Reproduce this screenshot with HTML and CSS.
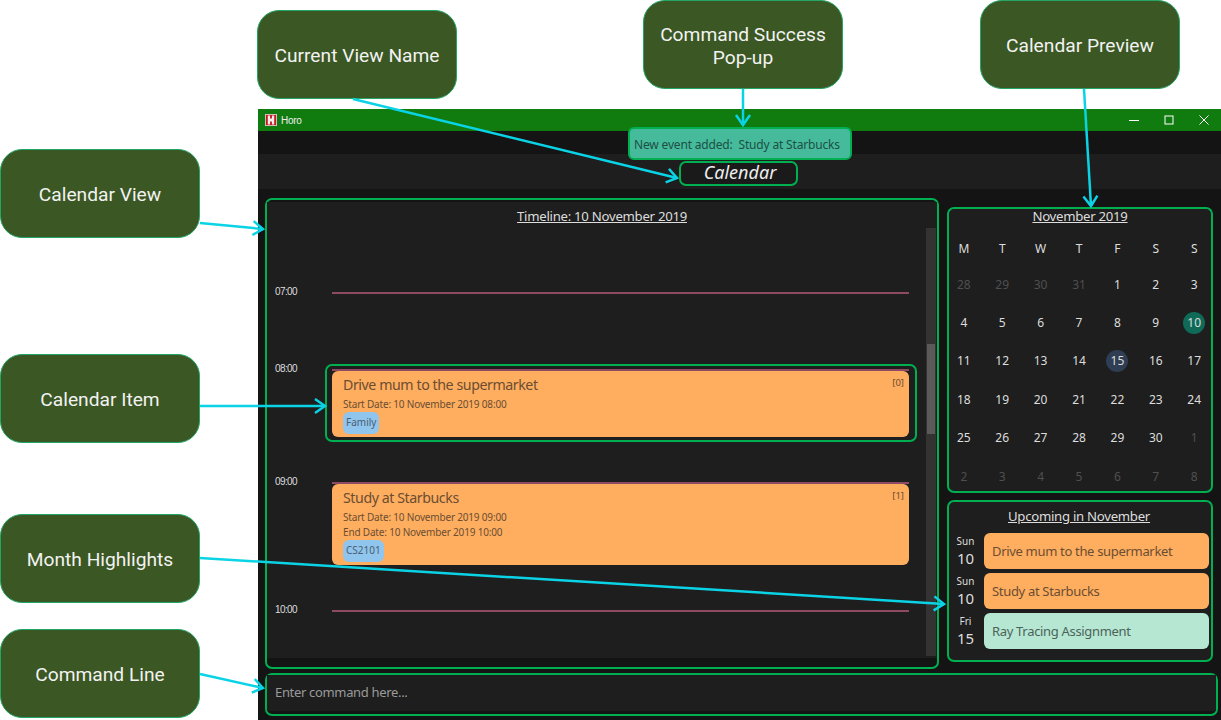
FILE: index.html
```html
<!DOCTYPE html>
<html lang="en">
<head>
  <meta charset="UTF-8">
  <title>Horo</title>
  <link rel="stylesheet" href="styles.css">
</head>
<body>
  <div class="stage">

    <div class="app">
      <div class="titlebar">
        <svg class="logo" width="12" height="12" viewBox="0 0 13 13">
          <rect x="0" y="0" width="13" height="13" fill="#d9c9c9"/>
          <rect x="1" y="1" width="11" height="11" fill="#c4161c"/>
          <path d="M3 1.500h2.500v3.500h2v-3.500H10v10H7.500v-3.500h-2v3.500H3z" fill="#f4eeee"/>
        </svg>
        <span class="app-name">Horo</span>
        <div class="win-controls">
          <svg width="10" height="10" viewBox="0 0 10 10"><path d="M0 5.500h10" stroke="#fff" fill="none"/></svg>
          <svg width="10" height="10" viewBox="0 0 10 10"><rect x="1" y="1" width="8" height="8" stroke="#fff" fill="none"/></svg>
          <svg width="10" height="10" viewBox="0 0 10 10"><path d="M.5.5l9 9M9.500.5l-9 9" stroke="#fff" fill="none"/></svg>
        </div>
      </div>

      <div class="result-bar"></div>
      <div class="view-bar"><div class="view-name">Calendar</div></div>

      <div class="main">
        <div class="columns">
          <div class="panel timeline-panel">
            <div class="timeline-body">
              <h2 class="panel-title timeline-title">Timeline: 10 November 2019</h2>
              <div class="timeline">
                <div class="rows">
                  <div class="hour hour-empty">
                    <span class="hour-label">07:00</span>
                    <div class="hour-line"></div>
                  </div>
                  <div class="hour hour-first">
                    <span class="hour-label">08:00</span>
                    <div>
                      <div class="hour-line"></div>
                      <div class="event">
                        <span class="event-index">[0]</span>
                        <div class="event-name">Drive mum to the supermarket</div>
                        <div class="event-date">Start Date: 10 November 2019 08:00</div>
                        <span class="tag">Family</span>
                      </div>
                    </div>
                  </div>
                  <div class="hour">
                    <span class="hour-label">09:00</span>
                    <div>
                      <div class="hour-line"></div>
                      <div class="event">
                        <span class="event-index">[1]</span>
                        <div class="event-name">Study at Starbucks</div>
                        <div class="event-date">Start Date: 10 November 2019 09:00</div>
                        <div class="event-date">End Date: 10 November 2019 10:00</div>
                        <span class="tag">CS2101</span>
                      </div>
                    </div>
                  </div>
                  <div class="hour">
                    <span class="hour-label">10:00</span>
                    <div class="hour-line"></div>
                  </div>
                </div>
                <div class="scrollbar"><div class="scroll-thumb"></div></div>
              </div>
            </div>
          </div>

          <div class="side">
            <div class="panel month-panel">
              <h2 class="panel-title month-title">November 2019</h2>
              <div class="month-grid">
                <span class="head">M</span><span class="head">T</span><span class="head">W</span><span class="head">T</span><span class="head">F</span><span class="head">S</span><span class="head">S</span>
                <span class="off">28</span><span class="off">29</span><span class="off">30</span><span class="off">31</span><span>1</span><span>2</span><span>3</span>
                <span>4</span><span>5</span><span>6</span><span>7</span><span>8</span><span>9</span><span><b class="has-event">10</b></span>
                <span>11</span><span>12</span><span>13</span><span>14</span><span><b class="today">15</b></span><span>16</span><span>17</span>
                <span>18</span><span>19</span><span>20</span><span>21</span><span>22</span><span>23</span><span>24</span>
                <span>25</span><span>26</span><span>27</span><span>28</span><span>29</span><span>30</span><span class="off">1</span>
                <span class="off">2</span><span class="off">3</span><span class="off">4</span><span class="off">5</span><span class="off">6</span><span class="off">7</span><span class="off">8</span>
              </div>
            </div>

            <div class="panel upcoming-panel">
              <h2 class="panel-title upcoming-title">Upcoming in November</h2>
              <div class="upcoming-row">
                <div class="up-day"><small>Sun</small>10</div>
                <div class="up-card">Drive mum to the supermarket</div>
              </div>
              <div class="upcoming-row">
                <div class="up-day"><small>Sun</small>10</div>
                <div class="up-card">Study at Starbucks</div>
              </div>
              <div class="upcoming-row">
                <div class="up-day"><small>Fri</small>15</div>
                <div class="up-card up-card-task">Ray Tracing Assignment</div>
              </div>
            </div>
          </div>
        </div>

        <div class="panel command-box">
          <div class="command-text">Enter command here...</div>
        </div>
      </div>
    </div>

    <!-- things drawn over the app -->
    <div class="popup">New event added:&nbsp; Study at Starbucks</div>
    <div class="item-mark"></div>

    <div class="callout c-view-name">Current View Name</div>
    <div class="callout c-success">Command Success<br>Pop-up</div>
    <div class="callout c-preview">Calendar Preview</div>
    <div class="callout c-calendar">Calendar View</div>
    <div class="callout c-item">Calendar Item</div>
    <div class="callout c-month">Month Highlights</div>
    <div class="callout c-command">Command Line</div>

    <svg class="arrows" width="1221" height="720" viewBox="0 0 1221 720">
      <defs>
        <marker id="head" markerUnits="userSpaceOnUse" markerWidth="20" markerHeight="20" refX="14" refY="10" orient="auto">
          <path d="M4 3l10 7-10 7" fill="none" stroke="#0bd3e6" stroke-width="2.5"/>
        </marker>
      </defs>
      <g stroke="#0bd3e6" stroke-width="2.5" marker-end="url(#head)">
        <line x1="353" y1="99" x2="677" y2="178"/>
        <line x1="743" y1="89" x2="743" y2="125"/>
        <line x1="1084" y1="89" x2="1091" y2="206"/>
        <line x1="200" y1="223" x2="263" y2="229"/>
        <line x1="200" y1="406" x2="325" y2="406"/>
        <line x1="200" y1="558" x2="944" y2="604"/>
        <line x1="200" y1="674" x2="263" y2="688"/>
      </g>
    </svg>
  </div>
</body>
</html>
```

FILE: styles.css
```css
* {
  box-sizing: border-box;
}
body {
  margin: 0;
  background: #fff;
  font-family: "Noto Sans", sans-serif;
}
.stage {
  position: relative;
  width: 1221px;
  height: 720px;
  overflow: hidden;
}

/* app window */
.app {
  position: absolute;
  left: 258px;
  top: 109px;
  width: 963px;
  height: 611px;
  background: #141414;
  display: flex;
  flex-direction: column;
}
.titlebar {
  height: 22px;
  background: #107c10;
  display: flex;
  align-items: center;
  padding-left: 7px;
  color: #eee;
}
.logo {
  margin-right: 4px;
  margin-top: -1px;
}
.app-name {
  font-family: "Liberation Sans", sans-serif;
  font-size: 10px;
  letter-spacing: -0.3px;
}
.win-controls {
  margin-left: auto;
  display: flex;
  gap: 25px;
  padding-right: 12px;
}
.result-bar {
  height: 23px;
}
.view-bar {
  height: 35px;
  background: #1e1e1e;
  display: flex;
  justify-content: center;
  align-items: flex-start;
  padding-top: 7px;
  padding-right: 2px;
}
.view-name {
  width: 119px;
  height: 25px;
  padding-left: 3px;
  border: 2px solid #00b050;
  border-radius: 7px;
  background: #1a1a1a;
  color: #eee;
  font-style: italic;
  font-size: 18px;
  line-height: 18px;
  text-align: center;
}
.main {
  flex: 1;
  padding: 9px 3px 4px 7px;
  display: flex;
  flex-direction: column;
  gap: 4px;
}
.columns {
  height: 471px;
  display: flex;
  gap: 8px;
}
.panel {
  border: 2px solid #00b050;
  border-radius: 7px;
}
.panel-title {
  margin: 0;
  font-weight: 400;
  font-size: 13.2px;
  letter-spacing: -0.28px;
  color: #ddd;
  text-align: center;
  text-decoration: underline;
}

/* timeline */
.timeline-panel {
  width: 674px;
  padding: 2px 0 9px;
}
.timeline-body {
  height: 100%;
  background: #1e1e1e;
  display: flex;
  flex-direction: column;
}
.timeline-title {
  height: 26px;
  line-height: 28px;
}
.timeline {
  flex: 1;
  display: flex;
  min-height: 0;
  overflow: hidden;
}
.rows {
  flex: 1;
  padding: 64px 17px 0 8px;
}
.hour {
  display: grid;
  grid-template-columns: 57px 1fr;
  height: 128px;
}
.hour-empty {
  height: 77px;
}
.hour-first {
  height: 113px;
}
.hour-label {
  font-family: "Liberation Sans", sans-serif;
  font-size: 10px;
  letter-spacing: -0.6px;
  line-height: 12px;
  color: #ddd;
  margin-top: -6px;
}
.hour-line {
  height: 2px;
  background: #8e4a62;
}
.event {
  position: relative;
  background: #ffad5f;
  border-radius: 6px;
  padding: 3px 11px 3.5px;
  color: #6a4d32;
}
.event-name {
  font-size: 14.2px;
  letter-spacing: -0.43px;
  line-height: 21px;
  margin-bottom: 1.5px;
}
.event-date {
  font-size: 10px;
  letter-spacing: -0.18px;
  line-height: 15px;
}
.event-index {
  position: absolute;
  top: 5px;
  right: 5px;
  font-size: 9.5px;
}
.tag {
  display: block;
  width: fit-content;
  padding: 0 3px;
  height: 22px;
  line-height: 21px;
  background: #90c5ee;
  border-radius: 6px;
  font-size: 10px;
  color: #4c5e6e;
}
.scrollbar {
  width: 10px;
  background: #333;
  margin-right: 1px;
  margin-bottom: 2px;
  padding-top: 116px;
}
.scroll-thumb {
  height: 90px;
  margin: 0 1px;
  background: #5a5a5a;
}

/* month */
.side {
  width: 266px;
  padding-top: 9px;
  display: flex;
  flex-direction: column;
  gap: 7px;
}
.month-panel {
  height: 286px;
  background: #1e1e1e;
}
.month-title {
  height: 20px;
  line-height: 15px;
}
.month-grid {
  display: grid;
  grid-template-columns: repeat(7, 38.4px);
  grid-template-rows: 36px;
  grid-auto-rows: 38.4px;
  justify-content: center;
  margin-left: -2px;
  font-size: 12px;
  color: #ddd;
}
.month-grid span {
  display: flex;
  align-items: center;
  justify-content: center;
}
.month-grid .head {
  padding-top: 2px;
}
.month-grid .off {
  color: #4f4f4f;
}
.month-grid b {
  width: 22px;
  height: 22px;
  border-radius: 50%;
  font-weight: 400;
  text-align: center;
  line-height: 22px;
}
.has-event {
  background: #0f6b58;
}
.today {
  background: #2f3e52;
}

/* upcoming */
.upcoming-panel {
  height: 162px;
  background: #1e1e1e;
  padding-right: 2px;
}
.upcoming-title {
  height: 31px;
  line-height: 29px;
}
.upcoming-row {
  display: flex;
  height: 36px;
  margin-bottom: 4px;
}
.up-day {
  width: 33px;
  margin-right: 2px;
  flex-shrink: 0;
  text-align: center;
  color: #ddd;
  font-size: 15px;
  line-height: 20px;
}
.up-day small {
  display: block;
  font-size: 10px;
  line-height: 13px;
  padding-top: 2px;
}
.up-card {
  flex: 1;
  background: #ffad5f;
  border-radius: 6px;
  padding-left: 8px;
  font-size: 13px;
  letter-spacing: -0.32px;
  line-height: 36px;
  color: #6a4d32;
}
.up-card-task {
  background: #b6e7d3;
  color: #4c6359;
}

/* command box */
.command-box {
  height: 43px;
  background: #141414;
  padding-bottom: 3px;
}
.command-text {
  height: 100%;
  background: #1e1e1e;
  padding-left: 8px;
  font-size: 13px;
  letter-spacing: -0.33px;
  line-height: 35px;
  color: #9a9a9a;
}

/* overlays */
.popup {
  position: absolute;
  left: 628px;
  top: 127px;
  width: 224px;
  height: 33px;
  border: 2px solid #00b050;
  border-radius: 6px;
  background: #45bb9b;
  color: #1d4f44;
  font-size: 12px;
  letter-spacing: -0.17px;
  line-height: 32px;
  padding-left: 4px;
}
.item-mark {
  position: absolute;
  left: 325px;
  top: 364px;
  width: 592px;
  height: 78px;
  border: 2px solid #00b050;
  border-radius: 7px;
}
.callout {
  position: absolute;
  width: 200px;
  height: 89px;
  border: 1px solid #23a566;
  border-radius: 22px;
  background: #3b5723;
  color: #f2f2f2;
  font-family: Roboto, sans-serif;
  font-size: 19.2px;
  line-height: 23px;
  padding-top: 2px;
  display: flex;
  align-items: center;
  justify-content: center;
  text-align: center;
}
.c-view-name { left: 257px; top: 10px; }
.c-success { left: 643px; top: 0; }
.c-preview { left: 980px; top: 0; }
.c-calendar { left: 0; top: 149px; }
.c-item { left: 0; top: 354px; }
.c-month { left: 0; top: 514px; }
.c-command { left: 0; top: 629px; }
.arrows {
  position: absolute;
  left: 0;
  top: 0;
}
```
